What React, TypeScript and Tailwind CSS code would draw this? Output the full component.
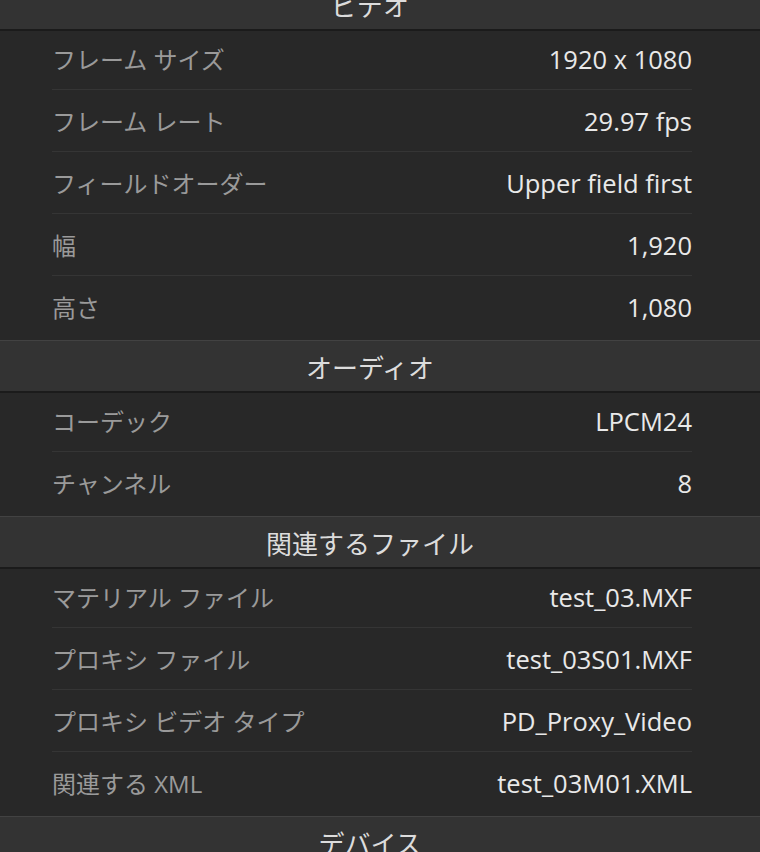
import React from 'react'

type Row = { label: string; value: string }

const sections: { title: string; rows: Row[] }[] = [
    {
        title: 'ビデオ',
        rows: [
            { label: 'フレーム サイズ', value: '1920 x 1080' },
            { label: 'フレーム レート', value: '29.97 fps' },
            { label: 'フィールドオーダー', value: 'Upper field first' },
            { label: '幅', value: '1,920' },
            { label: '高さ', value: '1,080' },
        ],
    },
    {
        title: 'オーディオ',
        rows: [
            { label: 'コーデック', value: 'LPCM24' },
            { label: 'チャンネル', value: '8' },
        ],
    },
    {
        title: '関連するファイル',
        rows: [
            { label: 'マテリアル ファイル', value: 'test_03.MXF' },
            { label: 'プロキシ ファイル', value: 'test_03S01.MXF' },
            { label: 'プロキシ ビデオ タイプ', value: 'PD_Proxy_Video' },
            { label: '関連する XML', value: 'test_03M01.XML' },
        ],
    },
    {
        title: 'デバイス',
        rows: [
            { label: 'モデル', value: 'PXW-Z280' },
        ],
    },
]

const SectionHeader: React.FC<{ title: string; first?: boolean }> = ({ title, first }) => (
    <div
        className={`flex items-center justify-center pr-[20px] pt-[4px] h-[53px] bg-[#333333] border-t border-t-[#424242] border-b-2 border-b-[#1b1b1b] text-[26px] text-[#dcdcdc] ${first ? '-mt-[22px]' : ''}`}
    >
        {title}
    </div>
)

const App: React.FC = () => {
    return (
        <div
            className="w-[760px] h-[852px] overflow-hidden bg-[#282828]"
            style={{ fontFamily: '"Open Sans", "Noto Sans CJK JP", sans-serif' }}
        >
            {sections.map((section, i) => (
                <div key={section.title}>
                    <SectionHeader title={section.title} first={i === 0} />
                    <div className="bg-[#282828] pl-[52px] pr-[68px] divide-y divide-[#353535]">
                        {section.rows.map((row) => (
                            <div
                                key={row.label}
                                className="flex items-center justify-between pt-[15px] pb-[13px] first:pt-[12px] last:pb-[16px] leading-[33px]"
                            >
                                <span className="text-[24px] text-[#9a9a9a]">{row.label}</span>
                                <span className="text-[25.5px] text-[#e9e9e9]">{row.value}</span>
                            </div>
                        ))}
                    </div>
                </div>
            ))}
        </div>
    )
}

export default App
